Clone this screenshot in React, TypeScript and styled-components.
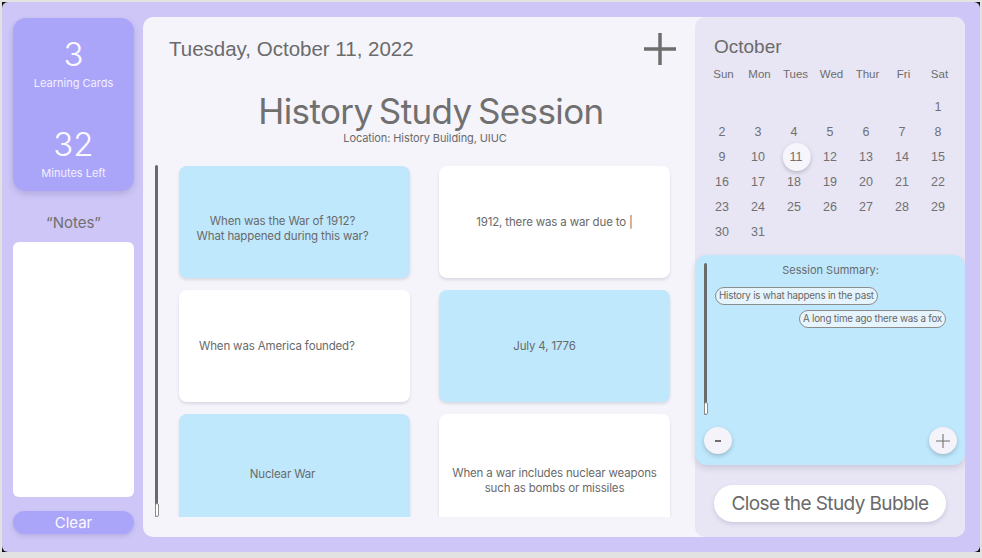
import React from "react";
import styled, { createGlobalStyle } from "styled-components";

const Global = createGlobalStyle`
  html, body { margin: 0; padding: 0; background: #e2e2e2; }
  body { font-family: "Inter", "Noto Sans", sans-serif; color: #6f6f6f; }
  * { box-sizing: border-box; }
`;

const Backdrop = styled.div`
  width: 978px;
  height: 550px;
  margin: 2px 0 0 2px;
  background: #111;
`;

const Frame = styled.div`
  width: 100%;
  height: 100%;
  background: #cdc6f6;
  border-radius: 6px;
  display: flex;
  gap: 9px;
  padding: 15px 15px 15px 11px;
`;

const Sidebar = styled.aside`
  width: 121px;
  display: flex;
  flex-direction: column;
  padding-top: 1px;
  padding-bottom: 1px;
`;

const StatCard = styled.div`
  height: 173px;
  background: #aba5fa;
  border-radius: 13px;
  box-shadow: 0 3px 6px rgba(60, 50, 120, 0.18);
  display: flex;
  flex-direction: column;
  align-items: center;
  padding-top: 18px;
  color: #fbfaff;
`;

const StatGroup = styled.div<{ $gap?: number }>`
  display: flex;
  flex-direction: column;
  align-items: center;
  margin-top: ${(p) => p.$gap ?? 0}px;
`;

const StatNumber = styled.div`
  font-size: 33px;
  line-height: 36px;
  font-weight: 300;
`;

const StatLabel = styled.div`
  font-size: 11px;
  line-height: 14px;
  margin-top: 4px;
  color: #f2f0ff;
`;

const NotesLabel = styled.div`
  margin-top: 23px;
  margin-bottom: 10px;
  font-size: 15px;
  line-height: 18px;
  text-align: center;
  color: #707070;
`;

const NotesBox = styled.div`
  height: 255px;
  background: #ffffff;
  border-radius: 6px;
`;

const ClearButton = styled.button`
  margin-top: 14px;
  height: 23px;
  border: none;
  border-radius: 12px;
  background: #aba5fa;
  color: #fbfaff;
  font-family: "Inter", sans-serif;
  font-size: 15px;
  line-height: 23px;
  padding: 0;
  box-shadow: 0 2px 4px rgba(60, 50, 120, 0.15);
`;

const Main = styled.main`
  flex: 1;
  display: flex;
  background: #f5f4fb;
  border-radius: 10px;
  overflow: hidden;
`;

const Session = styled.section`
  width: 552px;
  display: flex;
  flex-direction: column;
  padding-bottom: 20px;
  min-height: 0;
`;

const HeaderRow = styled.div`
  display: flex;
  align-items: center;
  justify-content: space-between;
  padding: 16px 19px 0 26px;
  height: 48px;
`;

const DateText = styled.div`
  font-family: "Liberation Sans", Arial, sans-serif;
  font-size: 20.5px;
  color: #6b6b6b;
`;

const Title = styled.h1`
  margin: 28px 0 0;
  padding-left: 24px;
  text-align: center;
  font-size: 35px;
  line-height: 36px;
  font-weight: 400;
  letter-spacing: -0.6px;
  word-spacing: -3px;
  color: #707070;
`;

const Location = styled.div`
  margin-top: 2px;
  padding-left: 12px;
  text-align: center;
  font-size: 11px;
  line-height: 14px;
  color: #6a6a6a;
  letter-spacing: -0.1px;
`;

const CardsArea = styled.div`
  margin-top: 20px;
  flex: 1;
  min-height: 0;
  display: flex;
  gap: 21px;
  padding-left: 12px;
  overflow: hidden;
`;

const ScrollTrack = styled.div<{ $tail: number }>`
  width: 3px;
  flex-shrink: 0;
  background: #6a6a6a;
  border-radius: 2px;
  position: relative;
  &::after {
    content: "";
    position: absolute;
    left: -0.5px;
    right: -0.5px;
    bottom: 0;
    height: ${(p) => p.$tail}px;
    background: #ffffff;
    border: 1px solid #8a8a8a;
    border-radius: 2px;
  }
`;

const CardGrid = styled.div`
  display: grid;
  grid-template-columns: 231px 231px;
  grid-auto-rows: 112px;
  column-gap: 29px;
  row-gap: 12px;
  padding-top: 1px;
`;

const Card = styled.div<{
  $blue?: boolean;
  $align?: string;
  $padL?: number;
  $padR?: number;
  $padT?: number;
}>`
  background: ${(p) => (p.$blue ? "#bfe8fd" : "#ffffff")};
  border-radius: 8px;
  box-shadow: 0 2px 3px rgba(80, 80, 110, 0.16);
  display: flex;
  align-items: center;
  justify-content: ${(p) => (p.$align === "left" ? "flex-start" : "center")};
  text-align: ${(p) => p.$align ?? "center"};
  padding-left: ${(p) => p.$padL ?? 0}px;
  padding-right: ${(p) => p.$padR ?? 0}px;
  padding-top: ${(p) => p.$padT ?? 0}px;
  font-size: 11.5px;
  line-height: 15px;
  letter-spacing: -0.15px;
  color: #6a6a6a;
  white-space: pre-line;
`;

const Side = styled.section`
  flex: 1;
  background: #e8e6f5;
  border-radius: 10px;
  display: flex;
  flex-direction: column;
  padding-bottom: 15px;
`;

const MonthLabel = styled.div`
  padding: 18px 0 0 19px;
  font-family: "Liberation Sans", Arial, sans-serif;
  font-size: 19px;
  line-height: 24px;
  color: #6b6b6b;
`;

const CalGrid = styled.div`
  display: grid;
  grid-template-columns: repeat(7, 36px);
  padding-left: 9px;
`;

const WeekdayRow = styled(CalGrid)`
  margin-top: 8px;
  font-family: "Liberation Sans", Arial, sans-serif;
  font-size: 11.5px;
  line-height: 14px;
  color: #6d6d6d;
`;

const Weekday = styled.div`
  text-align: center;
  padding-left: 3px;
`;

const DaysGrid = styled(CalGrid)`
  margin-top: 13px;
  grid-auto-rows: 25px;
  font-family: "Liberation Sans", Arial, sans-serif;
  font-size: 12.5px;
  color: #707070;
`;

const Day = styled.div<{ $sel?: boolean }>`
  display: flex;
  align-items: center;
  justify-content: center;
  position: relative;
  z-index: 0;
  &::before {
    content: "";
    display: ${(p) => (p.$sel ? "block" : "none")};
    position: absolute;
    width: 28px;
    height: 28px;
    left: 50%;
    top: 50%;
    transform: translate(-40%, -50%);
    border-radius: 50%;
    background: #f6f5fb;
    box-shadow: 0 2px 4px rgba(0, 0, 0, 0.2);
    z-index: -1;
  }
  span { padding-left: ${(p) => (p.$sel ? 4 : 0)}px; }
`;

const Summary = styled.div`
  margin-top: 11px;
  height: 210px;
  background: #bfe8fd;
  border-radius: 12px;
  box-shadow: 0 3px 6px rgba(80, 80, 110, 0.2);
  padding: 8px 8px 11px 9px;
  display: flex;
  flex-direction: column;
`;

const SummaryBody = styled.div`
  height: 152px;
  display: flex;
  gap: 8px;
`;

const SummaryContent = styled.div`
  flex: 1;
  margin-right: 11px;
  display: flex;
  flex-direction: column;
`;

const SummaryTitle = styled.div`
  text-align: center;
  font-size: 11px;
  line-height: 14px;
  color: #6a6a6a;
  margin-bottom: 10px;
`;

const Chip = styled.div<{ $right?: boolean }>`
  align-self: ${(p) => (p.$right ? "flex-end" : "flex-start")};
  height: 18px;
  padding: 0 3px;
  border: 1px solid #8c8c8c;
  border-radius: 9px;
  background: #e6f5fd;
  font-size: 9.8px;
  line-height: 16px;
  letter-spacing: -0.22px;
  color: #666;
  margin-bottom: 5px;
`;

const SummaryActions = styled.div`
  margin-top: 12px;
  display: flex;
  justify-content: space-between;
`;

const RoundButton = styled.button`
  width: 28px;
  height: 27px;
  border-radius: 50%;
  border: none;
  padding: 0;
  background: #f4f3fa;
  box-shadow: 0 2px 4px rgba(0, 0, 0, 0.2);
  display: flex;
  align-items: center;
  justify-content: center;
`;

const CloseButton = styled.button`
  margin: 20px auto 0;
  width: 232px;
  height: 37px;
  border: none;
  border-radius: 19px;
  background: #ffffff;
  box-shadow: 0 2px 4px rgba(80, 80, 110, 0.2);
  font-family: "Inter", sans-serif;
  font-size: 19px;
  letter-spacing: -0.6px;
  color: #6a6a6a;
  padding: 0;
`;

const PlusIcon = ({ size, stroke }: { size: number; stroke: number }) => (
  <svg width={size} height={size} viewBox="0 0 32 32">
    <path d="M16 0 V32 M0 16 H32" stroke="#6e6e6e" strokeWidth={stroke} fill="none" />
  </svg>
);

const cards = [
  { text: "When was the War of 1912?\nWhat happened during this war?", blue: true, padR: 24, padT: 14 },
  { text: "1912, there was a war due to |", blue: false },
  { text: "When was America founded?", blue: false, align: "left", padL: 20 },
  { text: "July 4, 1776", blue: true, padR: 20 },
  { text: "Nuclear War", blue: true, padR: 24, padT: 8 },
  { text: "When a war includes nuclear weapons\nsuch as bombs or missiles", blue: false, padT: 22 },
];

const weekdays = ["Sun", "Mon", "Tues", "Wed", "Thur", "Fri", "Sat"];
const days: (number | null)[] = [null, null, null, null, null, null, ...Array.from({ length: 31 }, (_, i) => i + 1)];

export default function App() {
  return (
    <>
      <Global />
      <Backdrop>
        <Frame>
          <Sidebar>
            <StatCard>
              <StatGroup>
                <StatNumber>3</StatNumber>
                <StatLabel>Learning Cards</StatLabel>
              </StatGroup>
              <StatGroup $gap={36}>
                <StatNumber>32</StatNumber>
                <StatLabel>Minutes Left</StatLabel>
              </StatGroup>
            </StatCard>
            <NotesLabel>“Notes”</NotesLabel>
            <NotesBox />
            <ClearButton>Clear</ClearButton>
          </Sidebar>
          <Main>
            <Session>
              <HeaderRow>
                <DateText>Tuesday, October 11, 2022</DateText>
                <PlusIcon size={32} stroke={3.5} />
              </HeaderRow>
              <Title>History Study Session</Title>
              <Location>Location: History Building, UIUC</Location>
              <CardsArea>
                <ScrollTrack $tail={12} />
                <CardGrid>
                  {cards.map((c, i) => (
                    <Card
                      key={i}
                      $blue={c.blue}
                      $align={c.align}
                      $padL={c.padL}
                      $padR={c.padR}
                      $padT={c.padT}
                    >
                      {c.text}
                    </Card>
                  ))}
                </CardGrid>
              </CardsArea>
            </Session>
            <Side>
              <MonthLabel>October</MonthLabel>
              <WeekdayRow>
                {weekdays.map((d) => (
                  <Weekday key={d}>{d}</Weekday>
                ))}
              </WeekdayRow>
              <DaysGrid>
                {days.map((d, i) => (
                  <Day key={i} $sel={d === 11}>
                    <span>{d ?? ""}</span>
                  </Day>
                ))}
              </DaysGrid>
              <Summary>
                <SummaryBody>
                  <ScrollTrack $tail={11} />
                  <SummaryContent>
                    <SummaryTitle>Session Summary:</SummaryTitle>
                    <Chip>History is what happens in the past</Chip>
                    <Chip $right>A long time ago there was a fox</Chip>
                  </SummaryContent>
                </SummaryBody>
                <SummaryActions>
                  <RoundButton aria-label="remove">
                    <svg width="10" height="10" viewBox="0 0 10 10">
                      <path d="M2 5 H8" stroke="#6e6e6e" strokeWidth="2" />
                    </svg>
                  </RoundButton>
                  <RoundButton aria-label="add">
                    <PlusIcon size={14} stroke={2.4} />
                  </RoundButton>
                </SummaryActions>
              </Summary>
              <CloseButton>Close the Study Bubble</CloseButton>
            </Side>
          </Main>
        </Frame>
      </Backdrop>
    </>
  );
}
